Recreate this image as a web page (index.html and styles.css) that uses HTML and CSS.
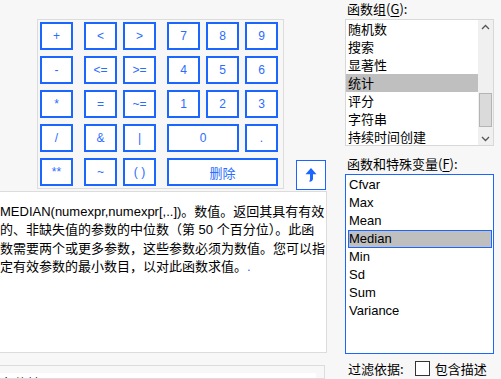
FILE: index.html
```html
<!DOCTYPE html>
<html lang="zh">
<head>
<meta charset="utf-8">
<link rel="stylesheet" href="styles.css">
</head>
<body>
<div class="page">
  <div class="left">
    <div class="keyrow">
      <div class="keypad">
        <div class="grp g1">
          <div class="key">+</div>
          <div class="key">-</div>
          <div class="key">*</div>
          <div class="key">/</div>
          <div class="key">**</div>
        </div>
        <div class="grp g2">
          <div class="key">&lt;</div><div class="key">&gt;</div>
          <div class="key">&lt;=</div><div class="key">&gt;=</div>
          <div class="key">=</div><div class="key">~=</div>
          <div class="key">&amp;</div><div class="key">|</div>
          <div class="key">~</div><div class="key">( )</div>
        </div>
        <div class="grp g3">
          <div class="key">7</div><div class="key">8</div><div class="key">9</div>
          <div class="key">4</div><div class="key">5</div><div class="key">6</div>
          <div class="key">1</div><div class="key">2</div><div class="key">3</div>
          <div class="key span2">0</div><div class="key">.</div>
          <div class="key span3 cjk">删除</div>
        </div>
      </div>
      <div class="arrowbtn">
        <svg width="12" height="14" viewBox="0 0 12 14"><path d="M6 0 L11.5 6.2 L8 6.2 L8 10.5 Q8 13.5 4.5 13.8 L4.3 13 Q5.2 12 5 10.5 L5 6.2 L0.5 6.2 Z" fill="#1a66ff"/></svg>
      </div>
    </div>
    <div class="desc">
      <div>MEDIAN(numexpr,numexpr[,..])。数值。返回其具有有效</div>
      <div>的、非缺失值的参数的中位数（第 50 个百分位）。此函</div>
      <div>数需要两个或更多参数，这些参数必须为数值。您可以指</div>
      <div>定有效参数的最小数目，以对此函数求值。<span class="dot">.</span></div>
    </div>
    <div class="lower">
      <div class="lower-inner">条件(I):</div>
    </div>
  </div>
  <div class="right">
    <div class="label">函数组(<u>G</u>):</div>
    <div class="list1">
      <div class="items">
        <div class="item">随机数</div>
        <div class="item">搜索</div>
        <div class="item">显著性</div>
        <div class="item sel">统计</div>
        <div class="item">评分</div>
        <div class="item">字符串</div>
        <div class="item">持续时间创建</div>
      </div>
      <div class="sbar">
        <div class="sb-up"><svg width="9" height="6" viewBox="0 0 9 6"><polyline points="1,5 4.5,1.5 8,5" fill="none" stroke="#555" stroke-width="1.3"/></svg></div>
        <div class="sb-gap1"></div>
        <div class="sb-thumb"></div>
        <div class="sb-gap2"></div>
        <div class="sb-down"><svg width="9" height="6" viewBox="0 0 9 6"><polyline points="1,1 4.5,4.5 8,1" fill="none" stroke="#555" stroke-width="1.3"/></svg></div>
      </div>
    </div>
    <div class="label label2">函数和特殊变量(<u>F</u>):</div>
    <div class="list2">
      <div class="vitem">Cfvar</div>
      <div class="vitem">Max</div>
      <div class="vitem">Mean</div>
      <div class="vitem vsel">Median</div>
      <div class="vitem">Min</div>
      <div class="vitem">Sd</div>
      <div class="vitem">Sum</div>
      <div class="vitem">Variance</div>
    </div>
    <div class="filter">
      <span>过滤依据:</span>
      <span class="check"></span>
      <span>包含描述</span>
    </div>
  </div>
</div>
</body>
</html>
```

FILE: styles.css
```css
html, body {
  margin: 0;
  padding: 0;
  background: #f7f7f7;
  overflow: hidden;
  width: 501px;
  height: 379px;
}
body {
  font-family: "Liberation Sans", "Noto Sans CJK SC", sans-serif;
  font-size: 13px;
  color: #000;
}
.page {
  display: flex;
  height: 379px;
}
.left {
  width: 327px;
  display: flex;
  flex-direction: column;
}
.keyrow {
  display: flex;
  align-items: flex-end;
  margin-top: 19px;
}
.keypad {
  margin-left: 37px;
  border: 1px solid #dcdcdc;
  padding: 2px 5px 2px 2px;
  display: flex;
  gap: 11px;
  background: #f7f7f7;
}
.grp {
  display: grid;
  grid-auto-rows: 28px;
  row-gap: 6px;
  column-gap: 6px;
}
.g1 { grid-template-columns: 33px; }
.g2 { grid-template-columns: 33px 33px; }
.g3 { grid-template-columns: 33px 33px 33px; }
.key {
  box-sizing: border-box;
  border: 2px solid #1a66ff;
  background: #fff;
  color: #2a6cff;
  display: flex;
  align-items: center;
  justify-content: center;
  font-family: "Liberation Sans", "Noto Sans CJK SC", sans-serif;
  font-size: 12px;
}
.key.cjk { font-family: "Noto Sans CJK SC", sans-serif; font-size: 13px; }
.span2 { grid-column: span 2; }
.span3 { grid-column: span 3; }
.arrowbtn {
  box-sizing: border-box;
  width: 30px;
  height: 30px;
  margin-left: 12px;
  margin-bottom: -1px;
  border: 1px solid #1a66ff;
  background: #fff;
  display: flex;
  align-items: center;
  justify-content: center;
}
.desc {
  margin-top: 2px;
  margin-left: -1px;
  box-sizing: border-box;
  width: 328px;
  height: 162px;
  border: 1px solid #dcdcdc;
  background: #fff;
  padding-top: 11px;
  line-height: 18.3px;
  font-family: "Liberation Sans", "Noto Sans CJK SC", sans-serif;
  font-size: 13px;
  white-space: nowrap;
  overflow: hidden;
}
.dot { color: #1a66ff; }
.lower {
  margin-top: 12px;
  margin-left: -1px;
  width: 326px;
  border: 1px solid #dcdcdc;
  padding: 7px 8px 0 0;
  flex: 1;
  box-sizing: border-box;
  overflow: hidden;
}
.lower-inner {
  background: #fff;
  height: 30px;
  font-family: "Noto Sans CJK SC", sans-serif;
  font-size: 13px;
  line-height: 18px;
  padding-left: 1px;
  padding-top: 1px;
}
.right {
  margin-left: 18px;
  width: 149px;
  display: flex;
  flex-direction: column;
}
.label {
  font-family: "Noto Sans CJK SC", sans-serif;
  font-size: 13px;
  height: 19px;
  line-height: 18px;
  padding-left: 2px;
}
.label u { text-underline-offset: 2px; }
.label2 {
  margin-top: 9px;
  height: 18px;
  margin-bottom: 1px;
}
.list1 {
  box-sizing: border-box;
  height: 127px;
  border: 1px solid #d8d8d8;
  background: #fff;
  display: flex;
  overflow: hidden;
}
.items {
  flex: 1;
  overflow: hidden;
}
.item {
  height: 18px;
  line-height: 18px;
  padding-left: 2px;
  font-family: "Noto Sans CJK SC", sans-serif;
  font-size: 13px;
  white-space: nowrap;
}
.sel { background: #bfbfbf; }
.sbar {
  width: 15px;
  background: #f0f0f0;
  display: flex;
  flex-direction: column;
}
.sb-up, .sb-down {
  display: flex;
  align-items: center;
  justify-content: center;
}
.sb-up { height: 14px; }
.sb-down { height: 13px; }
.sb-gap1 { height: 59px; }
.sb-thumb {
  box-sizing: border-box;
  height: 34px;
  margin: 0 1px;
  background: #dadada;
  border: 1px solid #b4b4b4;
}
.sb-gap2 { height: 5px; }
.list2 {
  box-sizing: border-box;
  height: 180px;
  border: 1px solid #1a66ff;
  background: #fff;
  padding: 1px 1px 0 2px;
}
.vitem {
  box-sizing: border-box;
  height: 18px;
  line-height: 18px;
  padding-left: 1px;
  font-family: "Liberation Sans", sans-serif;
  font-size: 13px;
}
.vsel {
  background: #bfbfbf;
  border: 1px solid #1a66ff;
  padding-left: 0;
  line-height: 16px;
}
.filter {
  margin-top: 6px;
  display: flex;
  align-items: center;
  gap: 5px;
  padding-left: 3px;
  font-family: "Noto Sans CJK SC", sans-serif;
  font-size: 13px;
  height: 16px;
}
.check {
  box-sizing: border-box;
  width: 15px;
  height: 15px;
  border: 1px solid #333;
  background: #fff;
  margin-left: 6px;
}
```
